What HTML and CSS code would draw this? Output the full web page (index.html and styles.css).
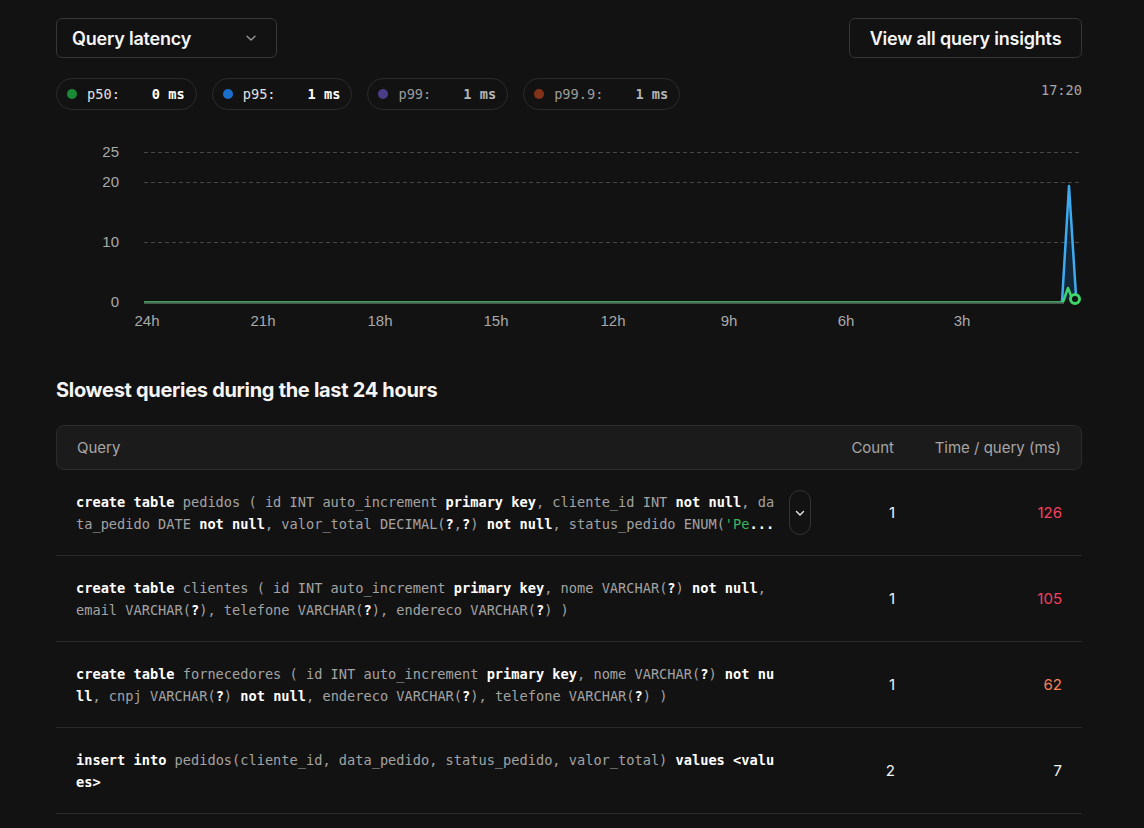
FILE: index.html
```html
<!DOCTYPE html>
<html lang="en">
<head>
<meta charset="utf-8">
<title>Query insights</title>
<link rel="stylesheet" href="styles.css">
</head>
<body>
<div class="page">
  <div class="topbar">
    <button class="select">
      <span>Query latency</span>
      <svg class="chev" width="14" height="14" viewBox="0 0 14 14"><path d="M3 5.2 L7 9 L11 5.2" fill="none" stroke="#9a9a9a" stroke-width="1.3" stroke-linecap="round" stroke-linejoin="round"/></svg>
    </button>
    <button class="btn">View all query insights</button>
  </div>

  <div class="legend-row">
    <div class="legend">
      <div class="pill"><span class="dot d50"></span><span class="lbl">p50:</span><span class="val">0 ms</span></div>
      <div class="pill"><span class="dot d95"></span><span class="lbl">p95:</span><span class="val">1 ms</span></div>
      <div class="pill muted"><span class="dot d99"></span><span class="lbl">p99:</span><span class="val">1 ms</span></div>
      <div class="pill muted"><span class="dot d999"></span><span class="lbl">p99.9:</span><span class="val">1 ms</span></div>
    </div>
    <div class="time">17:20</div>
  </div>

  <svg class="chart" width="1026" height="230" viewBox="0 0 1026 230">
    <g class="grid">
      <line x1="88" y1="32.5" x2="1026" y2="32.5"/>
      <line x1="88" y1="62.5" x2="1026" y2="62.5"/>
      <line x1="88" y1="122.5" x2="1026" y2="122.5"/>
    </g>
    <g class="ylab">
      <text x="63" y="37">25</text>
      <text x="63" y="67">20</text>
      <text x="63" y="127">10</text>
      <text x="63" y="187">0</text>
    </g>
    <g class="xlab">
      <text x="91" y="206">24h</text>
      <text x="207" y="206">21h</text>
      <text x="324" y="206">18h</text>
      <text x="440" y="206">15h</text>
      <text x="557" y="206">12h</text>
      <text x="673" y="206">9h</text>
      <text x="790" y="206">6h</text>
      <text x="906" y="206">3h</text>
    </g>
    <line x1="88" y1="183" x2="1008" y2="183" stroke="#5c6b62" stroke-width="1.5"/>
    <line x1="88" y1="181.8" x2="1008" y2="181.8" stroke="#3f9d63" stroke-width="1.5"/>
    <path d="M1006 182 L1013 66 L1020 176 Z" fill="#143149" opacity="0.7"/>
    <path d="M1006 182 L1013 66 L1020 176" fill="none" stroke="#3eaaf0" stroke-width="2.5" stroke-linejoin="round"/>
    <path d="M1007 182 L1012 168 L1015.5 177" fill="none" stroke="#3fd46c" stroke-width="2.5" stroke-linejoin="round"/>
    <circle cx="1019" cy="179" r="4.5" fill="#121212" stroke="#3fd46c" stroke-width="3"/>
  </svg>

  <h2 class="title">Slowest queries during the last 24 hours</h2>

  <div class="table">
    <div class="thead">
      <div>Query</div>
      <div class="num">Count</div>
      <div class="num">Time / query (ms)</div>
    </div>

    <div class="row">
      <div class="qcell">
        <div class="code"><b>create</b> <b>table</b> pedidos ( id INT auto_increment <b>primary</b> <b>key</b>, cliente_id INT <b>not</b> <b>null</b>, data_pedido DATE <b>not</b> <b>null</b>, valor_total DECIMAL(<b>?</b>,<b>?</b>) <b>not</b> <b>null</b>, status_pedido ENUM(<span class="str">'Pe</span><b>...</b></div>
        <button class="expand"><svg width="12" height="12" viewBox="0 0 12 12"><path d="M2.5 4.5 L6 8 L9.5 4.5" fill="none" stroke="#e8e8e8" stroke-width="1.4" stroke-linecap="round" stroke-linejoin="round"/></svg></button>
      </div>
      <div class="num">1</div>
      <div class="num red">126</div>
    </div>

    <div class="row">
      <div class="qcell">
        <div class="code"><b>create</b> <b>table</b> clientes ( id INT auto_increment <b>primary</b> <b>key</b>, nome VARCHAR(<b>?</b>) <b>not</b> <b>null</b>, email VARCHAR(<b>?</b>), telefone VARCHAR(<b>?</b>), endereco VARCHAR(<b>?</b>) )</div>
      </div>
      <div class="num">1</div>
      <div class="num red">105</div>
    </div>

    <div class="row">
      <div class="qcell">
        <div class="code"><b>create</b> <b>table</b> fornecedores ( id INT auto_increment <b>primary</b> <b>key</b>, nome VARCHAR(<b>?</b>) <b>not</b> <b>null</b>, cnpj VARCHAR(<b>?</b>) <b>not</b> <b>null</b>, endereco VARCHAR(<b>?</b>), telefone VARCHAR(<b>?</b>) )</div>
      </div>
      <div class="num">1</div>
      <div class="num orange">62</div>
    </div>

    <div class="row">
      <div class="qcell">
        <div class="code"><b>insert</b> <b>into</b> pedidos(cliente_id, data_pedido, status_pedido, valor_total) <b>values</b> <b>&lt;values&gt;</b></div>
      </div>
      <div class="num">2</div>
      <div class="num">7</div>
    </div>
  </div>
</div>
</body>
</html>
```

FILE: styles.css
```css
* { box-sizing: border-box; }

html, body {
  margin: 0;
  background: #121212;
  color: #ededed;
  font-family: Inter, "Noto Sans", "Liberation Sans", sans-serif;
}

.page {
  padding: 18px 62px 0 56px;
  width: 1144px;
}

.topbar {
  display: flex;
  justify-content: space-between;
  align-items: center;
  height: 40px;
}

.select, .btn {
  font-family: Inter, "Liberation Sans", sans-serif;
  font-size: 18px;
  font-weight: 600;
  color: #f5f5f5;
  background: #121212;
  border: 1px solid #363636;
  border-radius: 6px;
  height: 40px;
  letter-spacing: -0.2px;
}

.select {
  width: 221px;
  display: flex;
  align-items: center;
  justify-content: space-between;
  padding: 0 18px 0 15px;
}

.chev { display: block; }

.btn {
  width: 233px;
  padding: 0;
}

.legend-row {
  margin-top: 20px;
  display: flex;
  justify-content: space-between;
  align-items: flex-start;
}

.legend {
  display: flex;
  gap: 15px;
}

.pill {
  display: flex;
  align-items: center;
  height: 32px;
  padding: 0 11px 0 10px;
  border: 1px solid #2b2b2b;
  border-radius: 16px;
  font-family: "DejaVu Sans Mono", "Liberation Mono", monospace;
  font-size: 13.65px;
}

.dot {
  width: 10px;
  height: 10px;
  border-radius: 50%;
  margin-right: 10px;
}
.d50 { background: #1a8b35; }
.d95 { background: #1b6fcc; }
.d99 { background: #4a3c86; }
.d999 { background: #84331a; }

.lbl { color: #e2e2e2; }
.val { margin-left: 32px; color: #ffffff; font-weight: 700; }

.pill.muted .lbl { color: #9c9c9c; }
.pill.muted .val { color: #b4b4b4; font-weight: 700; }

.time {
  font-family: "DejaVu Sans Mono", "Liberation Mono", monospace;
  font-size: 13.65px;
  color: #a8a8a8;
  padding-top: 4px;
}

.chart {
  display: block;
  margin-top: 10px;
}

.grid line {
  stroke: #464646;
  stroke-width: 1;
  stroke-dasharray: 4 3;
}

.ylab text {
  fill: #a9a9a9;
  font-family: "Liberation Sans", Arial, sans-serif;
  font-size: 15px;
  text-anchor: end;
}

.xlab text {
  fill: #a9a9a9;
  font-family: "Liberation Sans", Arial, sans-serif;
  font-size: 15px;
  text-anchor: middle;
}

.title {
  margin: 26px 0 21px;
  font-size: 20px;
  line-height: 28px;
  font-weight: 700;
  color: #f5f5f5;
  letter-spacing: -0.3px;
}

.thead, .row {
  display: grid;
  grid-template-columns: 1fr 78px 167px;
  align-items: center;
  padding: 0 20px;
}

.thead {
  height: 45px;
  background: #1b1b1b;
  border: 1px solid #2c2c2c;
  border-radius: 8px;
  font-size: 15px;
  color: #a6a6a6;
}

.num { text-align: right; }

.row {
  height: 86px;
  border-bottom: 1px solid #2a2a2a;
  font-size: 15px;
  color: #f2f2f2;
}

.qcell {
  display: flex;
  align-items: center;
  gap: 12px;
}

.code {
  width: calc(85ch + 3px);
  flex: none;
  font-family: "DejaVu Sans Mono", "Liberation Mono", monospace;
  font-size: 13.65px;
  line-height: 22px;
  color: #a3a3a3;
  word-break: break-all;
}

.code b {
  color: #ffffff;
  font-weight: 700;
}

.code .str { color: #3cb55a; }

.expand {
  width: 22px;
  height: 45px;
  border: 1px solid #343434;
  border-radius: 11px;
  background: #121212;
  padding: 0;
  display: flex;
  align-items: center;
  justify-content: center;
}

.red { color: #f5405f; }
.orange { color: #f98157; }
```
